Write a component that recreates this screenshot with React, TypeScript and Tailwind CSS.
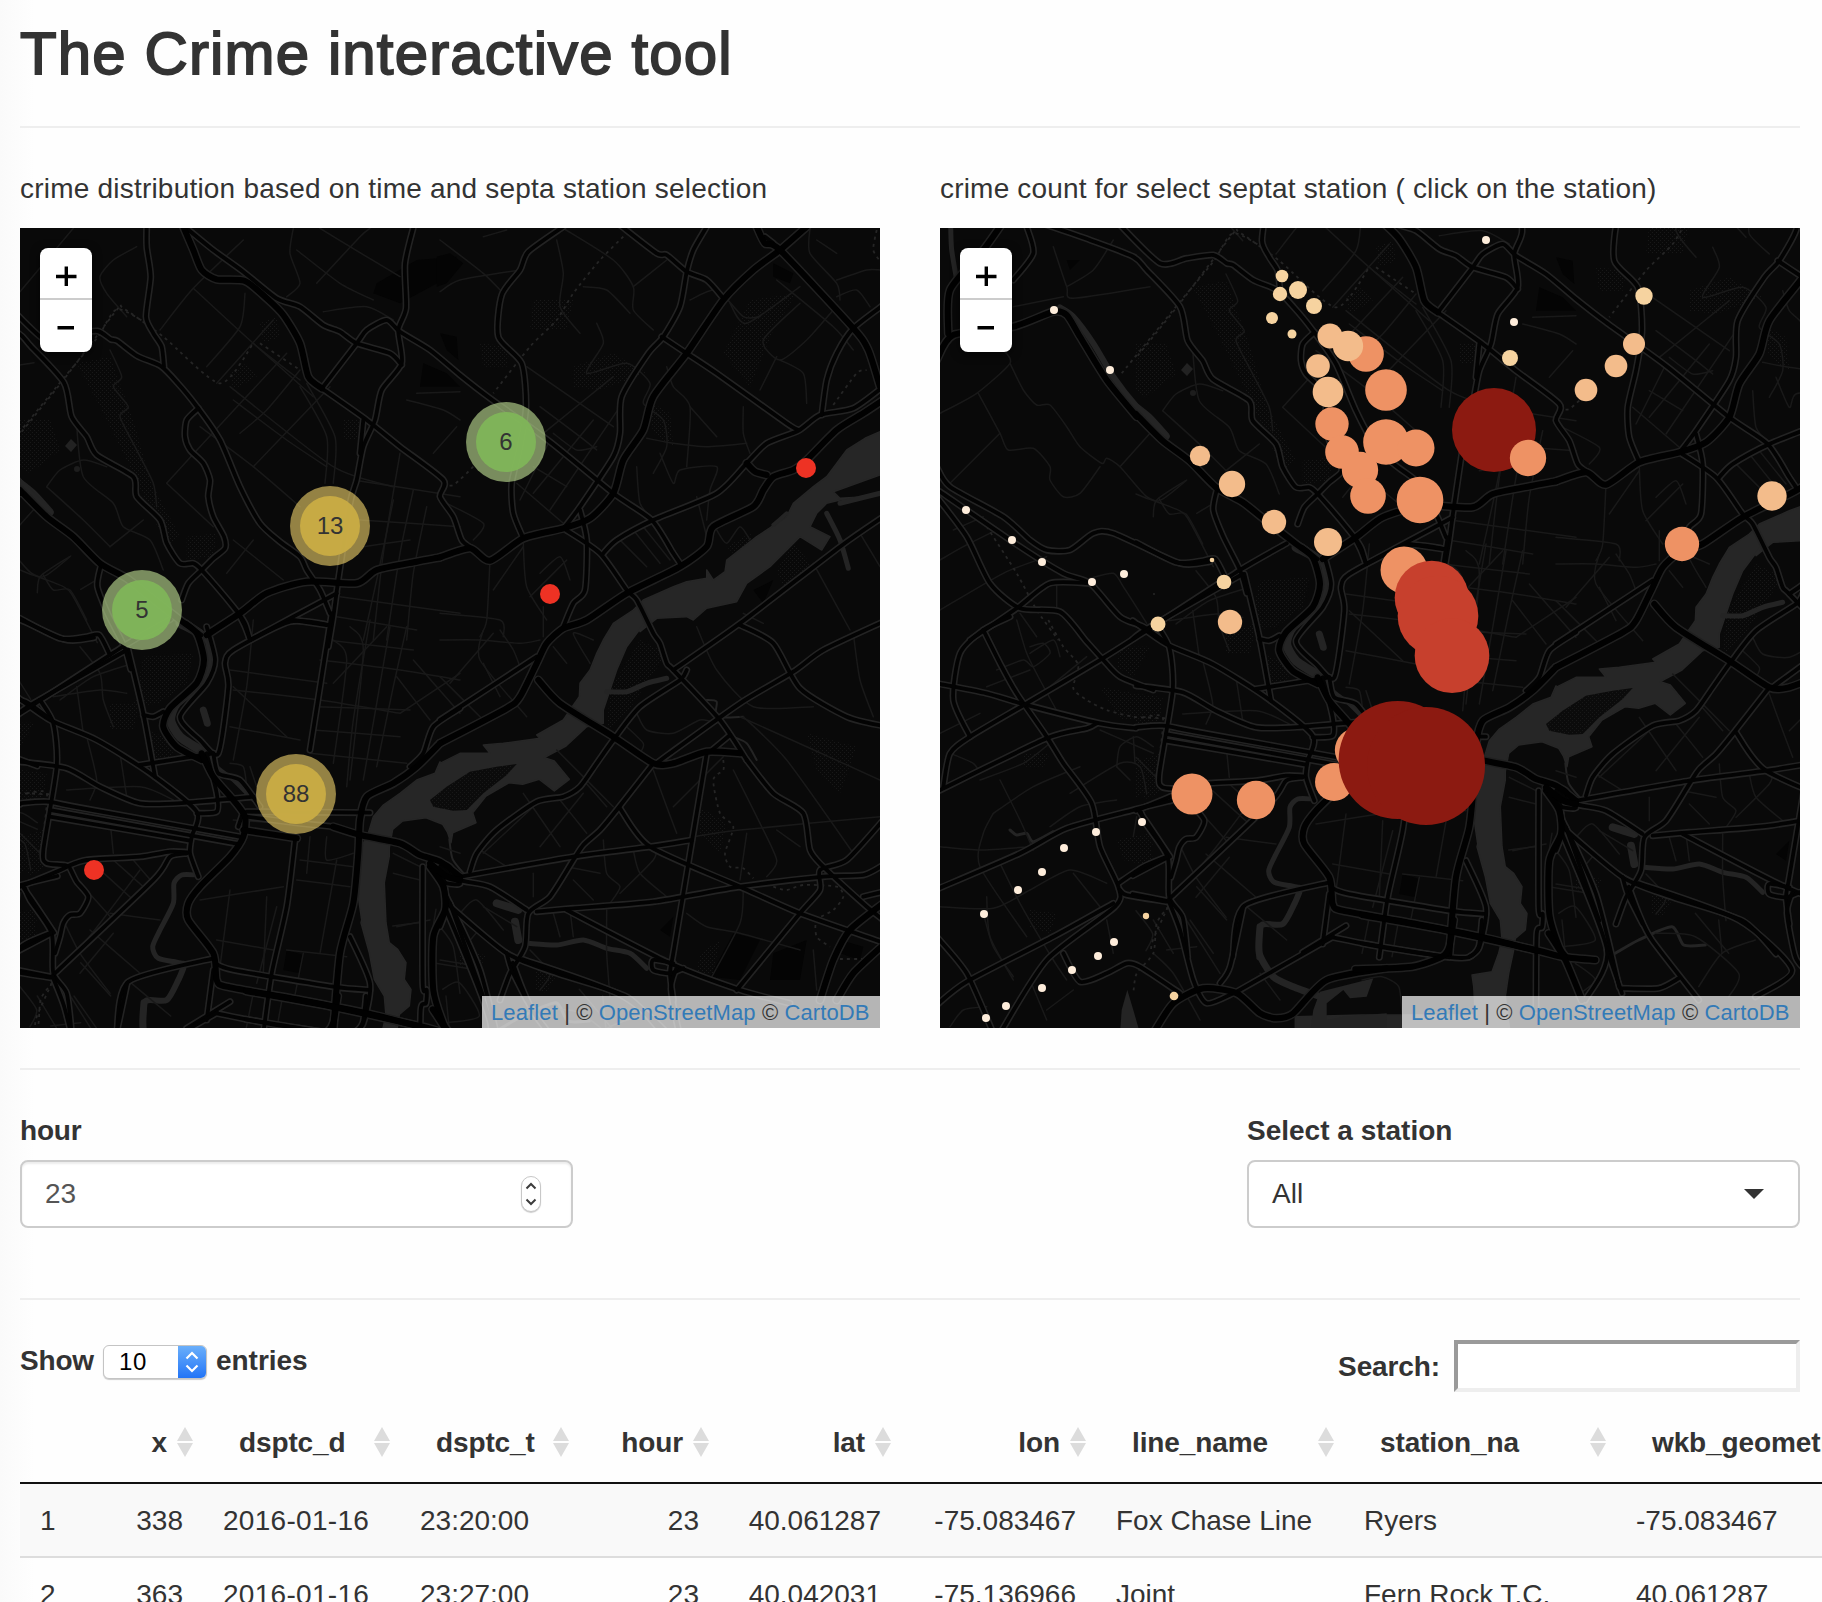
import React from "react";

/* ---------- base map ---------- */

type Pt = [number, number];

// Survey sheets: every sheet is digitised at 3 units per map pixel with its own origin.
const SHEETS: Record<string, Pt> = {
  A: [-20, -8],
  B: [420, -8],
  C: [-20, 392],
  D: [420, 392],
  E: [-216, 68],
  F: [-216, 468],
  G: [226, 468],
};

const parse = (sheet: string, s: string): Pt[] =>
  s.split(" ").map((p) => {
    const [x, y] = p.split(",").map(Number);
    return [x / 3 + SHEETS[sheet][0], y / 3 + SHEETS[sheet][1]] as Pt;
  });

const smooth = (p: Pt[]): string => {
  let d = `M${p[0][0].toFixed(1)} ${p[0][1].toFixed(1)}`;
  const k = 0.12;
  for (let i = 0; i < p.length - 1; i++) {
    const a = p[i - 1] || p[i];
    const b = p[i];
    const c = p[i + 1];
    const e = p[i + 2] || c;
    const q = [
      b[0] + (c[0] - a[0]) * k,
      b[1] + (c[1] - a[1]) * k,
      c[0] - (e[0] - b[0]) * k,
      c[1] - (e[1] - b[1]) * k,
      c[0],
      c[1],
    ].map((v) => v.toFixed(1));
    d += `C${q.join(" ")}`;
  }
  return d;
};

const line = (row: string) => {
  const sheet = row[0];
  return smooth(parse(sheet, row.slice(2)));
};

const MOTORWAYS = [
  "A 550,20 580,90 605,150 650,178 735,183 800,235 850,285 900,370 925,470 965,505",
  "A 60,810 140,890 220,950 300,1030 380,1075 450,1130 540,1200 590,1240 612,1320 590,1390 510,1465 490,1520 530,1580 605,1620",
  "C 605,400 640,470 700,540 735,590 730,650 690,710 600,800 565,850 565,900 640,1000 650,1080 680,1100 900,1140 1100,1180 1260,1220",
  "A 620,1245 720,1180 800,1120 920,1085 1070,1090 1130,1050 1250,1025 1320,1012",
  "B 0,1012 90,985 150,1022 250,955 370,925 450,895 520,820 550,720 610,630 640,530 740,400 850,240 940,150 1020,90 1100,20",
  "B 950,20 975,70 1020,90 1240,325 1285,390 1320,500",
  "B 1330,540 1270,580 1190,630 1100,720 1060,750 1000,770 970,810 940,860 820,920 800,980 720,1040 560,1120 440,1200 370,1225 320,1270 290,1330 240,1430 200,1465 0,1570",
  "C 1320,370 1250,440 1180,490 1100,530 1080,600 1075,700 1060,850 1020,1000 1000,1230",
  "B 920,730 945,755 980,765",
  "D 295,180 360,250 520,350 640,430 700,430 800,395 900,400",
  "C 730,630 890,655",
  "C 1000,620 1080,645 1200,670 1260,705 1320,725 1380,770",
  "D 1330,850 1230,930 1180,1020 1140,1140",
  "D 1330,975 1240,1060 1190,1140",
  "C 1290,740 1330,800 1335,870 1300,950 1300,1110 1330,1210 1350,1240",
  "C 1290,730 1340,770 1380,780",
  "E 50,420 100,345 280,320 400,275 440,285 480,350 560,480 650,590",
  "E 240,20 190,90 90,210 85,340",
  "F 700,1240 760,1150 850,1105 950,1120 1020,1180 1070,1195 1120,1180 1220,1080 1400,1045",
  "G -20,1048 150,1040 240,1010 262,980 275,900",
  "G 0,885 250,930 520,990 600,1010 700,1020",
  "G 560,940 610,1020 660,1140",
];

const ROADS = [
  "A 440,15 440,80 452,170 438,290 460,340 485,380 492,440",
  "A 965,505 1100,600 1200,680 1330,780 1320,830 1360,890 1385,960 1415,985",
  "A 560,25 640,90 730,155 830,235 900,260 970,315 1020,335 1070,370 1170,400 1205,435",
  "A 1242,15 1215,130 1218,265 1195,330 1205,430 1145,510 1125,600 1090,680 1070,780 1050,850 1015,1080 1000,1190 985,1280",
  "A 1090,600 1080,700",
  "A 970,500 1070,370 1100,330 1160,300 1200,335 1290,390 1380,465 1470,535 1650,665 1840,820 1955,900 2020,1000 2040,1030",
  "E 600,15 720,130 800,115 880,105 920,130 940,135 1000,180 1070,210 1120,260 1183,337 1248,432 1308,572 1368,682 1428,737 1488,782 1508,822 1548,882 1578,952",
  "A 595,565 560,600 555,650 570,690 610,730 630,780 625,830 640,890 672,950 675,985 640,1015 605,1050 565,1090 545,1140",
  "E 380,15 510,60 640,110 680,150 780,260 803,362 848,422 878,477 988,542 998,602 1068,672 1088,742 1128,802 1168,802 1193,822 1288,932 1323,982 1338,1032",
  "A 750,1260 880,1190 1010,1120",
  "A 880,1200 980,1215",
  "A 605,1245 560,1210",
  "A 60,1195 180,1255 260,1250 298,1245 330,1305",
  "B 370,20 265,95 240,150 185,225 175,350 245,430 258,560 240,680 215,790 220,880 250,955",
  "B 540,15 650,100 680,105 740,155 800,180 850,235",
  "B 800,20 760,90 740,155 720,260 670,350 625,400 545,530 540,640 520,710 420,860 375,920",
  "B 665,350 740,400 830,460 1040,610 1075,630",
  "B 1330,500 1240,565 1140,585 1075,632 980,670 920,730 830,820 640,900 530,960 490,1000",
  "B 1145,585 1160,480 1190,400 1240,325 1330,255",
  "B 975,50 1000,70",
  "B 370,925 480,1000 560,1110 590,1140 640,1240 660,1270 680,1330 700,1350 840,1500 920,1620",
  "D 920,420 1000,520 1090,580 1110,690 1150,740 1280,860 1330,900",
  "B 420,870 440,960 435,1110 400,1150 370,1220",
  "B 1330,890 1200,980 900,1210 700,1350",
  "D 740,150 720,180 600,260 520,360 470,430 420,500 370,530 290,545 170,630 110,700 90,755",
  "D 900,15 1000,70 1080,205 1220,290 1330,318",
  "D 1330,5 1150,90 1060,155 900,250 690,400 650,430",
  "D 870,345 810,395",
  "D 640,430 530,570 480,630 430,675 400,720 330,830 265,880 255,980 210,1060 180,1140",
  "D 540,565 630,680 900,800 1080,880 1330,968",
  "D 800,400 760,640 740,760 700,1000 690,1060 700,1140",
  "D 60,770 400,710 630,680 755,660",
  "D 290,875 400,865 640,845 900,800 1150,770 1270,765 1330,735",
  "D 1330,600 1220,720 1140,750 1140,810 1080,880 890,1110",
  "D 1270,830 1330,815",
  "D 380,870 690,1030 900,1110 1050,1150",
  "D 700,1030 640,1020 640,1050 690,1060 730,1045",
  "D 20,850 200,1000 350,1060 560,1130 660,1230",
  "D 30,850 130,1130",
  "D 200,1000 215,1050 260,1140",
  "D 0,725 30,740 60,780 150,800 260,870",
  "D 0,740 60,790 20,790 0,770",
  "D 10,770 20,860 0,920",
  "C 1610,110 1320,300",
  "C 1380,265 1300,320 1270,400 1230,440",
  "C 60,550 140,545 250,565 720,650",
  "C 150,570 715,672",
  "C 150,590 570,662",
  "C 740,575 1110,578",
  "C 60,425 200,445 300,500 420,550 560,548 760,530",
  "C 50,230 150,300 290,360 450,460 590,575 575,650 570,700 595,770",
  "C 50,285 100,250 380,90",
  "C 120,240 160,310 170,440 130,690 140,730 200,740 60,800",
  "C 75,805 90,840 155,940 160,1060 200,1120 215,1240",
  "C 200,740 260,720 420,710 510,695 565,697",
  "C 560,700 510,710 460,780 165,1060",
  "C 385,90 430,280 465,470",
  "C 430,285 460,290 490,275",
  "C 210,745 230,785 265,830 240,880 210,885 190,910 180,950 165,1000",
  "C 50,995 155,940",
  "C 50,1050 160,1072",
  "C 420,435 640,400",
  "C 620,400 650,520 650,575 590,580",
  "C 620,20 645,120 620,190 540,290 600,360 655,400 685,200 675,130 700,90 870,5 990,15",
  "C 720,-10 735,20 750,60",
  "C 995,-20 930,390",
  "C 885,660 860,860 815,1060 790,1240",
  "C 350,1240 385,1085 640,1015",
  "C 645,1030 700,1050 1000,1100 1110,1110",
  "C 640,1050 620,1200",
  "C 560,1225 690,1145",
  "C 650,1180 800,1210 1000,1240",
  "C 1050,950 1110,1090 1090,1210 1060,1238",
  "C 1268,740 1268,1090 1280,1110 1278,1150 1262,1170 1260,1400",
  "C 1340,830 1440,1050 1510,1330",
  "C 640,400 655,460 720,480 780,560",
  "C 730,575 715,620",
  "C 740,590 900,610 1000,620",
  "E 320,20 340,100 280,180",
  "E 50,740 90,800 250,890 330,960 380,990 450,990 520,940 580,940 780,1030 870,1025",
  "E 60,815 300,980 430,1060 510,1090 600,1190 670,1220 740,1270",
  "E 50,830 140,950 210,1090 300,1165 420,1175 500,1265 550,1320 600,1370 700,1410",
  "E 150,1260 290,1165 390,1090 510,1090",
  "E 890,810 880,870 910,950 960,1050 980,1120",
  "E 690,1225 960,1050 1100,970",
  "F 190,30 240,130 290,220 380,350 430,430 515,550 540,680 595,800 585,860 380,1020 240,1240",
  "F 50,190 200,220 320,255 540,310 648,325",
  "F 690,25 540,120 320,250 150,350 90,400 70,500",
  "F 270,-10 190,30 120,100 100,240 150,350",
  "F 50,515 380,355 500,325 530,310",
  "F 50,808 300,700 440,625 640,570 760,540",
  "F 655,570 690,620 750,710",
  "F 595,790 670,740 740,710",
  "F 50,1155 140,1085 400,950 580,850",
  "F 600,810 620,825 740,845",
  "F 50,950 140,1060 220,1240",
  "F 430,1000 480,1085 560,1060 620,1030 660,1040 780,1120",
  "F 950,1115 1240,950",
  "F 745,840 780,930 820,1080 860,1150 940,1120",
  "F 900,1090 930,1040 970,860",
  "G 0,970 250,1010 320,1012 350,980 360,900",
  "G 735,990 780,1120",
  "G 800,800 830,880 870,960 1010,1140",
  "G 600,640 735,990 670,1140",
  "G 780,1105 890,1105 950,1075",
  "G 830,790 1130,900 1290,1050 1180,1130",
  "G 1290,820 1275,880 1300,1010 1330,1050",
];

const STREETS = [
  "A 60,215 220,25", "A 410,80 340,120 300,170 320,220 380,290", "A 480,330 580,205 730,60", "A 580,205 760,370 900,480",
  "A 500,790 600,680 860,400", "A 500,790 640,920", "A 620,440 720,320 735,220", "A 760,740 990,500", "A 650,490 820,300",
  "A 600,620 760,740 900,860", "A 690,500 1000,740 1180,800", "A 760,370 940,530", "A 900,500 980,650 975,790",
  "A 920,490 1005,650 1000,790", "A 860,230 900,190 870,100 880,25", "A 890,90 1020,190 1120,240", "A 950,190 1080,50 1110,25",
  "A 960,25 1050,80 1200,170", "A 970,275 1100,260 1180,300", "A 700,540 860,660 980,740", "A 720,640 800,570 900,450",
  "A 140,800 180,750 250,720 320,740", "A 230,620 250,770 340,850 370,920 450,960 490,1050", "A 60,1050 130,1070 210,1010",
  "A 130,1065 160,1110 210,1110 260,1200", "A 330,980 430,900", "A 140,800 250,900 330,980", "A 330,390 365,470 340,500 385,560 360,590 410,690 460,790 470,860",
  "A 700,960 850,1080", "A 680,1060 760,960", "A 1060,780 1380,830", "A 1080,900 1380,920", "A 1090,980 1230,960",
  "A 1200,700 1150,1000 1120,1260", "A 1240,810 1200,1000 1160,1260", "A 1280,860 1240,1060 1220,1260", "A 1180,840 1130,1080 1090,1260",
  "A 1020,1130 1380,1180", "A 1010,1190 1250,1230", "A 1250,520 1380,515", "A 1220,540 1330,570 1380,600", "A 1370,620 1300,700",
  "B 0,60 130,160 180,210", "B 0,215 60,180 240,150", "B 130,50 200,30", "B 350,60 370,160 360,260 420,340", "B 370,25 520,120 580,200 580,270 640,330",
  "B 430,200 500,210 570,280", "B 580,200 680,120", "B 470,310 490,370 440,460 560,430 630,490 610,550 670,600 680,680 640,760",
  "B 260,440 520,620", "B 310,640 520,470", "B 280,820 460,600", "B 330,870 540,560", "B 300,560 420,650 470,690", "B 230,790 370,910",
  "B 340,640 410,690 470,680", "B 280,740 380,800", "B 240,840 330,660", "B 750,240 830,210 910,290 960,290", "B 860,240 900,190 1000,110",
  "B 870,250 920,310 1080,200", "B 1010,180 1180,320 1240,390", "B 1080,250 970,360 1020,420 1100,360 1180,270", "B 1020,420 1090,460 1100,550",
  "B 960,510 1010,410", "B 910,560 910,640 930,700", "B 680,440 700,500 750,560 740,740", "B 750,560 830,650", "B 620,655 700,670 800,680 920,670",
  "B 660,700 700,790 720,750 830,740 810,810 800,900", "B 590,740 600,850 640,900", "B 770,830 800,950", "B 540,960 620,1040", "B 580,930 660,1030", "B 610,920 690,1020",
  "B 830,930 860,970 900,920 930,960", "B 1110,25 1110,100 1190,190 1200,240", "B 1130,60 1190,100", "B 1190,180 1280,150 1320,150", "B 1190,230 1250,210 1290,260",
  "B 0,840 130,910 100,960", "B 250,970 260,1100 320,1200", "B 160,1110 250,980", "B 0,1180 180,1200 190,1250", "B 150,1020 140,1200 120,1250",
  "B 300,1060 360,1010 390,1080", "B 270,1130 380,1020", "B 310,1160 310,1250", "B 1260,940 1320,1040", "B 1120,1030 1230,1230", "B 910,1180 970,1210",
  "C 690,150 980,190", "C 700,210 960,240 1200,280", "C 690,320 900,360", "C 1000,60 1040,120 1000,430", "C 1050,20 1090,90 1050,480", "C 1110,0 1060,300 1040,500",
  "C 1170,20 1130,250 1090,480", "C 1220,20 1180,200 1130,440", "C 960,120 1200,150 1380,180", "C 980,60 1240,90", "C 950,260 1230,270",
  "C 940,330 1200,350", "C 1000,190 1160,20", "C 930,400 1220,430", "C 1190,170 1290,300", "C 1240,120 1380,280", "C 1200,280 1380,160", "C 690,430 730,440 740,500",
  "C 700,200 860,350", "C 760,0 740,200 700,420", "C 240,80 300,160 310,240 340,320", "C 160,230 300,210 380,220", "C 180,240 280,170 400,130", "C 230,200 250,340",
  "C 260,350 290,480 270,540", "C 360,400 380,530", "C 200,510 420,500 520,540", "C 60,640 120,700", "C 330,600 340,700", "C 250,800 340,900", "C 290,740 400,840",
  "C 340,720 430,800", "C 400,720 460,790", "C 190,900 240,1000 330,1120", "C 220,1010 300,910 420,750", "C 240,1060 340,940", "C 270,930 420,1060", "C 330,880 480,900",
  "C 690,810 660,1040", "C 600,840 850,800", "C 650,960 820,990", "C 830,860 770,1090", "C 800,830 790,1060", "C 900,720 1060,740", "C 890,780 1050,800",
  "C 1010,720 960,1000", "C 980,650 980,720 1060,700", "C 930,650 920,760", "C 860,990 1040,1010", "C 910,1000 880,1150", "C 770,500 750,440", "C 700,600 860,610",
  "C 60,1100 110,1170 90,1220", "C 1190,920 1290,900", "C 1180,700 1260,740", "C 1180,760 1260,780",
  "D 0,60 120,60 240,70 300,60", "D 130,30 120,120 260,290", "D 180,30 220,90 240,140", "D 30,190 160,40", "D 0,170 130,300", "D 130,130 180,230", "D 340,80 380,130",
  "D 450,130 400,40 460,60", "D 590,280 620,330 700,340 780,300 830,310", "D 560,320 610,370 600,400", "D 770,20 830,150 940,260 1120,260", "D 1240,40 1260,180 1300,290",
  "D 900,290 1100,380 1320,480", "D 910,290 1040,420 1240,700", "D 760,650 900,630 1320,590", "D 880,450 950,590 1010,720 980,770", "D 920,640 900,780", "D 1010,630 1080,680",
  "D 640,450 680,560 710,640", "D 350,390 520,560", "D 250,520 360,680", "D 360,540 440,640", "D 130,700 280,560", "D 300,680 430,520", "D 430,480 500,560",
  "D 490,660 500,760 540,800 510,850", "D 540,820 640,720 650,680", "D 580,690 600,760 680,830", "D 380,740 480,760", "D 280,760 280,830", "D 400,780 460,840", "D 740,880 800,920 900,940 1080,990",
  "D 810,1080 900,910 910,810", "D 500,870 500,1000 510,1130", "D 0,680 60,700", "D 60,880 110,840 190,930", "D 130,860 230,920", "D 1120,990 1130,1110", "D 0,920 40,980 60,1120",
  "D 390,870 400,950", "D 340,880 360,950", "D 0,1020 120,1040", "D 270,990 330,1060 300,1110", "D 120,690 200,740", "D 850,410 700,560",
  "E 60,580 170,520 270,430 250,390", "E 270,430 310,510 350,555 390,555 440,620 480,680 545,730 560,715 600,740 680,830 750,860 800,890 880,1040", "E 175,520 240,640 265,690 340,685 390,740 390,780 430,830 480,820 540,740",
  "E 600,740 690,640", "E 240,640 90,790", "E 400,80 440,200 460,235 690,200", "E 280,260 430,230", "E 440,200 520,150 580,60", "E 700,890 710,840 800,780", "E 830,880 880,850",
  "E 100,930 190,890", "E 60,1020 130,980 230,930", "E 60,1170 250,1060 380,1010", "E 510,1075 580,1060 610,1100 680,1210", "E 410,1090 410,1170", "E 300,1180 350,1250",
  "F 290,0 320,100 360,180 420,290", "F 60,340 180,280", "F 230,150 310,120 340,140 390,100 370,70 330,80", "F 390,200 500,110", "F 330,100 400,60 420,110", "F 200,200 330,150",
  "F 90,400 160,430 180,460", "F 180,480 310,430 390,370", "F 220,580 340,500 480,440", "F 220,580 190,640 180,740 320,950", "F 240,480 300,600 340,690", "F 390,620 480,560 590,540",
  "F 60,680 180,690 330,680", "F 240,730 300,850 400,1020 440,1080", "F 60,860 220,865 330,810 450,750 560,790", "F 200,830 210,950 280,1080", "F 540,330 700,400", "F 590,440 600,380 650,350 700,380", "F 640,350 645,430",
  "F 590,440 630,480", "F 450,520 600,430 660,440 680,520", "F 190,880 220,980 280,1070", "F 330,1080 380,1200", "F 560,900 580,1000", "F 460,760 540,860", "F 700,1000 760,1060 840,1200", "F 380,1170 460,1110", "F 740,990 830,980",
  "F 700,900 760,1000", "F 810,900 880,1000", "F 980,860 1100,960", "F 780,870 900,1060", "F 830,800 920,900", "F 650,590 640,650", "F 90,1220 130,1170 200,1160", "F 1020,1060 1080,1140",
  "G 20,900 0,1000", "G 110,900 90,1010", "G 570,640 550,760", "G 440,690 520,680", "G 560,800 680,820", "G 650,760 700,700", "G 590,880 640,860 700,960 600,980", "G 600,900 610,1000",
  "G 640,1030 700,1080 640,1130", "G 880,940 1000,950 1130,1060 1100,1130", "G 1070,900 1080,1000", "G 0,1080 60,1070 110,1100 120,1180", "G 1000,880 1100,1000", "G 1010,1100 1080,1000 1180,960",
];

const BOUNDARIES = [
  "A 65,635 190,480 350,270 370,265 490,350 660,490 760,370",
  "A 780,370 900,450",
  "B 550,50 480,120 400,220 350,300 270,380 160,520",
  "B 100,740 40,795 0,790",
  "D 850,420 850,450 820,480 840,580 880,620 855,700 870,740 910,745 940,775",
  "D 1000,800 1040,810 1090,795 1190,800 1210,830 1180,870 1130,900 1130,950 1170,980",
  "C 80,520 140,520 130,640 120,700",
  "C 155,1090 110,1190 105,1225",
  "E 605,460 780,245 880,125 940,40 1040,90",
  "E 200,920 290,1060 350,1170 415,1260",
  "F 385,0 430,80 475,135 460,205 500,240 560,270 640,290 740,295",
  "F 745,860 710,910 700,1000 650,1060 640,1120",
  "B 1180,555 1250,460 1280,450",
  "B 1310,30 1300,90 1325,130",
  "D 1200,1017 1270,1017",
];

const join = (parts: [string, string][]) =>
  "M" + parts.flatMap(([s, p]) => parse(s, p)).map(([x, y]) => `${x.toFixed(1)} ${y.toFixed(1)}`).join("L") + "Z";

const DELAWARE = join([
  ["B", "1400,610 1320,635 1275,655 1220,690 1160,770 1120,800 1060,850 1040,890 950,950 860,1020 855,1055 820,1080 800,1050 800,1075 740,1085 700,1100 610,1140 580,1170 520,1210 490,1260"],
  ["D", "470,100 450,150 420,190 418,230 390,270 370,300 290,345 300,355 190,370 130,375 150,400 60,400 0,430"],
  ["C", "1320,425 1305,460 1250,480 1200,520 1150,555 1120,590 1105,640 1080,690 1075,830 1085,900"],
  ["G", "345,680 370,770 385,850 415,900 420,960 410,1000 390,1055 330,1065 335,1100 340,1185 0,1185 -200,1190 -200,1280 450,1280 430,1130 440,1060 455,990 460,955 490,930 495,880 475,850 480,800 455,760 430,740 420,680 415,560 430,480 430,455 440,400 470,375 540,365 590,385 605,410 615,440 620,410 690,380 680,350 720,300 790,260 830,265 880,250 925,285 970,250 925,195 895,185 960,150"],
  ["D", "440,320 490,310 490,270 510,210 530,150 560,80 620,0"],
  ["B", "600,1235 650,1195 740,1190 760,1200 800,1165 890,1145 920,1090 990,1040 1080,950 1145,990 1170,950 1110,920 1130,880 1160,850 1200,840 1280,830 1200,835 1180,815 1320,765 1400,740"],
]);

const PETTY = join([["D", "-30,540 20,500 90,455 170,440 230,432 200,465 130,520 80,570 40,572 -20,560"]]);

const WATER_LINES: [string, number][] = [
  ["C 540,10 625,60 628,130 600,190 530,250 512,300 540,350 610,395", 9],
  ["C 610,395 650,440 700,480 760,540", 4],
  ["A 50,780 100,820 150,875", 7],
  ["A 500,1170 600,1235", 6],
  ["C 590,765 545,765 522,790 520,850 480,930 458,980 475,1015 550,1030", 5],
  ["C 550,1045 535,1080 500,1140 435,1145 430,1240", 6],
  ["F 1020,920 1018,1000 1060,1070 1120,1100 1200,1130", 7],
  ["E 420,262 460,290 520,370 580,470 650,560 740,650", 6],
  ["E 92,20 95,90 110,180", 5],
  ["D 500,215 560,215 620,190 680,175", 5],
  ["D 265,970 350,975 430,960 500,985 570,1000 620,1045", 5],
  ["D 170,850 235,870", 8],
  ["D 225,905 235,960", 8],
  ["B 1160,880 1200,960 1225,1045", 5],
  ["B 1200,850 1320,820", 5],
  ["B 1000,915 1040,880", 4],
  ["C 610,270 622,310", 7],
  ["G 610,430 620,490 660,540", 2],
  ["G 760,1000 830,960 930,920 965,975 1030,975", 3],
  ["F 270,630 290,645 320,640 340,665 400,635", 3],
  ["D 800,240 830,245 830,290 910,290", 2],
  ["D 880,350 920,370 950,420", 2],
];

const GREENS = [
  "A 60,600 150,600 180,690 90,760 60,740", "A 230,430 330,410 400,600 450,780 540,950 500,980 400,760 300,560", "A 690,460 740,430 770,470 700,510",
  "A 780,310 830,290 840,350 790,370", "A 1030,600 1080,600 1070,660 1030,660", "A 560,950 650,940 640,1010 560,1020",
  "B 280,240 400,240 380,330 270,330", "B 120,370 210,380 200,440 130,440", "B 400,440 520,400 620,460 480,510 400,500", "B 620,540 690,580 700,680 640,640",
  "B 930,240 1070,220 1000,330 930,500 850,400", "B 860,980 930,940 950,980 900,1020", "B 1060,970 1120,1040 1030,1100 1010,1050",
  "C 430,110 580,100 560,190 480,250 400,260", "C 330,250 420,250 400,330 330,330", "C 440,330 540,370 500,420 450,420", "C 60,450 140,460 130,540 60,540", "C 60,640 120,660 100,740 60,760",
  "C 60,880 110,900 90,960 60,960", "D 510,210 600,60 680,100 560,280 500,340", "D 0,510 130,450 200,450 60,560", "D 1100,340 1250,380 1200,520 1130,450",
  "D 780,1000 840,960 820,1060 770,1060", "D 780,560 860,610 840,700 780,640",
  "F 600,80 690,80 640,170 590,140", "F 540,200 700,230 720,300 600,300", "F 590,660 690,640 700,740 610,720", "F 660,420 720,400 720,520 670,540", "F 330,870 410,880 390,940 330,920", "F 310,400 390,400 370,440 310,440",
  "G 640,750 720,780 700,820 640,810", "G 870,820 930,840 900,890 870,880",
];

const SHADES = [
  "A 1130,190 1250,120 1370,110 1330,180 1200,250 1120,220", "A 1270,430 1340,460 1380,500 1260,500", "A 1320,340 1370,350 1375,420 1340,390",
  "B -10,110 30,100 70,130 20,190 -10,200", "B 1000,130 1060,160 1050,190 1000,170", "C 860,990 910,1005 900,1060 850,1050",
  "D 880,940 960,960 900,1080 810,1070", "D 1000,1000 1100,960 1080,1080 990,1080", "D 1200,960 1270,980 1260,1020 1200,1000", "D 660,930 700,890 690,950", "B 940,1110 1000,1080 970,1150", "E 440,120 480,120 450,150",
];

function BaseMap({ dx, dy, id }: { dx: number; dy: number; id: string }) {
  return (
    <svg className="absolute inset-0 h-full w-full" viewBox="0 0 860 800">
      <defs>
        <pattern id={id} width="4" height="4" patternUnits="userSpaceOnUse">
          <rect width="1" height="1" fill="#181818" />
          <rect x="2" y="2" width="1" height="1" fill="#181818" />
        </pattern>
      </defs>
      <rect width="860" height="800" fill="#090909" />
      <g transform={`translate(${dx} ${dy})`} fill="none" strokeLinecap="round" strokeLinejoin="round">
        {SHADES.map((r) => (
          <path key={r} d={join([[r[0], r.slice(2)]])} fill="#040404" />
        ))}
        {GREENS.map((r) => (
          <path key={r} d={join([[r[0], r.slice(2)]])} fill={`url(#${id})`} />
        ))}
        <path d={DELAWARE} fill="#262626" stroke="#262626" strokeWidth="1.5" />
        <path d={PETTY} fill="#0b0b0b" />
        <path d={PETTY} fill={`url(#${id})`} />
        {WATER_LINES.map(([r, w]) => (
          <path key={r} d={line(r)} stroke="#242424" strokeWidth={w} />
        ))}
        <path d="M51 211l6 6-6 7-6-6z" fill="#222222" />
        <circle cx="57" cy="241" r="3" fill="#1d1d1d" />
        <path d={join([["F", "600,1240 605,1170 622,1110 640,1170 660,1240"]])} fill="#242424" />
        <path d={join([["F", "1170,1240 1180,1170 1200,1115 1280,1095 1360,1075 1340,1130 1290,1135 1270,1110 1220,1150 1220,1200 1270,1190 1400,1180 1400,1240"]])} fill="#242424" />
        {STREETS.map((r) => (
          <path key={r} d={line(r)} stroke="#191919" strokeWidth="1.5" />
        ))}
        {BOUNDARIES.map((r) => (
          <path key={r} d={line(r)} stroke="#252525" strokeWidth="1.8" strokeDasharray="3 4" strokeLinecap="butt" />
        ))}
        {ROADS.map((r) => (
          <path key={r} d={line(r)} stroke="#232323" strokeWidth="7" />
        ))}
        {MOTORWAYS.map((r) => (
          <path key={r} d={line(r)} stroke="#202020" strokeWidth="9" />
        ))}
        {ROADS.map((r) => (
          <path key={r} d={line(r)} stroke="#030303" strokeWidth="3.8" />
        ))}
        {MOTORWAYS.map((r) => (
          <path key={r} d={line(r)} stroke="#010101" strokeWidth="6" />
        ))}
      </g>
    </svg>
  );
}

/* ---------- markers ---------- */

const CREAM = "#feeddb";
const SAND = "#f6d3a0";
const PEACH = "#f3bc8b";
const ORANGE = "#ee9264";
const RED = "#c7402d";
const DARK = "#8c1a11";

const NW: Pt = [-20, -8];
const NE: Pt = [422, -8];
const SW: Pt = [-20, 392];
const SE: Pt = [422, 392];

// quadrant, x, y, diameter (3 units per pixel), fill
const STATIONS: [Pt, number, number, number, string][] = [
  [NW, 402, 270, 24, CREAM], [NW, 570, 450, 24, CREAM], [NW, 138, 870, 24, CREAM], [NW, 276, 960, 24, CREAM],
  [NW, 366, 1026, 24, CREAM], [NW, 516, 1086, 24, CREAM], [NW, 612, 1062, 24, CREAM], [NW, 702, 1122, 4, "#4a4a4a"],
  [NW, 876, 1020, 14, SAND], [NW, 912, 1086, 44, SAND], [NW, 714, 1212, 45, SAND], [NW, 930, 1206, 73, PEACH],
  [NW, 840, 708, 61, PEACH], [NW, 936, 792, 79, PEACH], [NW, 1062, 906, 73, PEACH], [NW, 1224, 966, 84, PEACH],
  [NW, 1086, 168, 38, SAND], [NW, 1134, 210, 54, SAND], [NW, 1080, 222, 43, SAND], [NW, 1182, 258, 48, SAND],
  [NW, 1056, 294, 36, SAND], [NW, 1116, 342, 27, SAND], [NW, 1338, 402, 107, ORANGE], [NW, 1230, 348, 75, PEACH],
  [NW, 1284, 378, 91, PEACH], [NW, 1194, 438, 71, PEACH], [NW, 1224, 516, 92, PEACH], [NW, 1236, 612, 100, ORANGE],
  [NW, 1266, 696, 101, ORANGE], [NW, 1320, 750, 109, ORANGE], [NW, 1344, 828, 107, ORANGE],
  [NE, 72, 510, 125, ORANGE], [NE, 72, 666, 137, ORANGE], [NE, 162, 684, 111, ORANGE], [NE, 174, 840, 140, ORANGE],
  [NE, 372, 60, 24, CREAM], [NE, 456, 306, 24, CREAM], [NE, 444, 414, 48, SAND], [NE, 846, 228, 52, SAND],
  [NE, 816, 372, 66, PEACH], [NE, 762, 438, 68, PEACH], [NE, 672, 510, 68, PEACH], [NE, 396, 630, 252, DARK],
  [NE, 498, 714, 109, ORANGE], [NE, 1230, 828, 88, PEACH], [NE, 960, 972, 103, ORANGE], [NE, 126, 1050, 141, ORANGE],
  [NE, 209, 1133, 222, RED], [NE, 228, 1188, 242, RED], [SE, 270, 107, 224, RED],
  [SW, 816, 522, 123, ORANGE], [SW, 1008, 540, 115, ORANGE], [SW, 1242, 486, 114, ORANGE], [SW, 1310, 390, 131, ORANGE],
  [SE, 107, 420, 354, DARK], [SE, 192, 438, 354, DARK],
  [SW, 666, 606, 24, CREAM], [SW, 528, 636, 24, CREAM], [SW, 432, 684, 24, CREAM], [SW, 366, 756, 24, CREAM],
  [SW, 294, 810, 24, CREAM], [SW, 192, 882, 24, CREAM], [SW, 678, 888, 19, SAND], [SW, 582, 966, 24, CREAM],
  [SW, 534, 1008, 24, CREAM], [SW, 456, 1050, 24, CREAM], [SW, 366, 1104, 24, CREAM], [SW, 258, 1158, 24, CREAM],
  [SW, 198, 1194, 24, CREAM], [SW, 762, 1128, 26, SAND],
];

function StationDots() {
  return (
    <svg className="absolute inset-0 h-full w-full" viewBox="0 0 860 800">
      {STATIONS.map(([o, x, y, d, fill], i) => (
        <circle key={i} cx={x / 3 + o[0]} cy={y / 3 + o[1]} r={d / 6} fill={fill} />
      ))}
    </svg>
  );
}

const CLUSTERS = [
  { n: 6, x: 486, y: 214, green: true },
  { n: 13, x: 310, y: 298, green: false },
  { n: 5, x: 122, y: 382, green: true },
  { n: 88, x: 276, y: 566, green: false },
];

const CRIMES: Pt[] = [[786, 240], [530, 366], [74, 642]];

function CrimeMarkers() {
  return (
    <>
      {CRIMES.map(([x, y]) => (
        <div key={x} className="absolute -mt-[10px] -ml-[10px] size-5 rounded-full bg-[#ee3224]" style={{ left: x, top: y }} />
      ))}
      {CLUSTERS.map((c) => (
        <div
          key={c.n}
          className={
            "absolute -mt-10 -ml-10 flex size-20 items-center justify-center rounded-full " +
            (c.green ? "bg-[#b5d28c]/65" : "bg-[#f1d36c]/60")
          }
          style={{ left: c.x, top: c.y }}
        >
          <div
            className={
              "flex size-[60px] items-center justify-center rounded-full text-2xl " +
              (c.green ? "bg-[#80b559]/95" : "bg-[#c9ac44]/95")
            }
          >
            {c.n}
          </div>
        </div>
      ))}
    </>
  );
}

function MapPanel({ dx = 0, dy = 0, id, children }: { dx?: number; dy?: number; id: string; children: React.ReactNode }) {
  return (
    <div className="relative h-[800px] w-[860px] overflow-hidden bg-[#090909]">
      <BaseMap dx={dx} dy={dy} id={id} />
      {children}
      <div className="absolute top-5 left-5 w-[52px] overflow-hidden rounded-lg bg-white shadow-[0_2px_10px_rgba(0,0,0,0.65)]">
        <button className="flex h-[52px] w-full items-center justify-center border-b-2 border-[#cccccc]">
          <svg width="52" height="50" viewBox="0 0 52 50" stroke="#000" fill="none">
            <path d="M16 28.5h20.5M26.3 18.5v19.5" strokeWidth="3.4" />
          </svg>
        </button>
        <button className="flex h-[52px] w-full items-center justify-center">
          <svg width="52" height="52" viewBox="0 0 52 52" stroke="#000" fill="none">
            <path d="M17.500 27.700h16.500" strokeWidth="3.4" />
          </svg>
        </button>
      </div>
      <div className="absolute right-0 bottom-0 flex h-8 w-[398px] items-center bg-white/70 pt-0.5 pl-[9px] text-[22px] whitespace-pre tracking-[0.12px]">
        <span className="text-[#337ab7]">Leaflet</span> | © <span className="text-[#337ab7]">OpenStreetMap</span> ©{" "}
        <span className="text-[#337ab7]">CartoDB</span>
      </div>
    </div>
  );
}

/* ---------- table ---------- */

const HEADERS: [string, boolean][] = [
  ["x", true], ["dsptc_d", false], ["dsptc_t", false], ["hour", true], ["lat", true], ["lon", true],
  ["line_name", false], ["station_na", false], ["wkb_geometry", false],
];

const ROWS = [
  ["1", "338", "2016-01-16", "23:20:00", "23", "40.061287", "-75.083467", "Fox Chase Line", "Ryers", "-75.083467"],
  ["2", "363", "2016-01-16", "23:27:00", "23", "40.042031", "-75.136966", "Joint", "Fern Rock T.C.", "40.061287"],
];

const GRID = "grid w-[1900px] grid-cols-[60px_123px_197px_179px_140px_182px_195px_248px_272px_304px]";

function SortIcon() {
  return (
    <svg className="absolute top-1/2 right-[10px] -mt-[14px]" width="16" height="30" viewBox="0 0 16 30" fill="#dcdcdc">
      <path d="M8 0l8 14H0zM8 30l8-14H0z" />
    </svg>
  );
}

function DataTable() {
  return (
    <div className="w-[1802px] overflow-hidden">
      <div className={GRID + " h-[84px] border-b-2 border-[#111111] font-bold tracking-[-0.12px]"}>
        <div />
        {HEADERS.map(([h, right]) => (
          <div key={h} className={"relative flex items-center px-9 pt-1 " + (right ? "justify-end" : "")}>
            {h}
            <SortIcon />
          </div>
        ))}
      </div>
      {ROWS.map((r, i) => (
        <div key={r[0]} className={GRID + " h-[74px] items-center border-b-2 border-[#dddddd] pt-0.5 " + (i === 0 ? "bg-[#f9f9f9]" : "")}>
          {r.map((c, j) => (
            <div
              key={j}
              className={
                "px-5 whitespace-nowrap " +
                ([1, 4, 5, 6].includes(j) ? "text-right" : "") +
                (j === 2 ? "tracking-[0.3px]" : "")
              }
            >
              {c}
            </div>
          ))}
        </div>
      ))}
    </div>
  );
}

/* ---------- page ---------- */

export default function App() {
  return (
    <div className="h-[1602px] w-[1822px] overflow-hidden bg-[linear-gradient(to_right,#fafafa_0,#fefefe_34px)] pl-5 font-['Liberation_Sans',Arial,sans-serif] text-[28px] leading-10 text-[#333333]">
      <h1 className="h-[126px] pt-[21px] text-[60px] leading-[66px] font-normal tracking-[1.12px] [-webkit-text-stroke:1.8px_#333333]">
        The Crime interactive tool
      </h1>
      <div className="h-0.5 w-[1780px] bg-[#eeeeee]" />

      <div className="flex gap-[60px] pt-10">
        <div>
          <div className="h-[60px] pt-px tracking-[0.21px]">crime distribution based on time and septa station selection</div>
          <MapPanel id="dots-left">
            <CrimeMarkers />
          </MapPanel>
        </div>
        <div>
          <div className="h-[60px] pt-px tracking-[0.19px]">crime count for select septat station ( click on the station)</div>
          <MapPanel id="dots-right" dx={196} dy={-76}>
            <StationDots />
          </MapPanel>
        </div>
      </div>

      <div className="mt-10 h-0.5 w-[1780px] bg-[#eeeeee]" />

      <div className="flex w-[1780px] justify-between pt-10">
        <div className="w-[553px]">
          <div className="h-[50px] pt-px font-bold tracking-[-0.2px]">hour</div>
          <div className="flex h-[68px] items-center justify-between rounded-lg border-2 border-[#cccccc] bg-white pr-[30px] pl-[23px] text-[#555555] shadow-[inset_0_2px_2px_rgba(0,0,0,0.075)]">
            23
            <div className="flex h-9 w-5 flex-col items-center justify-center rounded-full border border-[#c8c8c8] bg-white shadow-[0_1px_1px_rgba(0,0,0,0.2)]">
              <svg width="12" height="24" viewBox="0 0 12 24" fill="none" stroke="#3c3c3c" strokeWidth="2">
                <path d="M1.5 6.5L6 2l4.500 4.500M1.500 17.500L6 22l4.500-4.500" />
              </svg>
            </div>
          </div>
        </div>
        <div className="w-[553px]">
          <div className="h-[50px] pt-px font-bold">Select a station</div>
          <div className="flex h-[68px] items-center justify-between rounded-lg border-2 border-[#cccccc] bg-white pr-[34px] pl-[23px]">
            All
            <svg width="20" height="10" viewBox="0 0 20 10" fill="#333333">
              <path d="M0 0h20L10 10z" />
            </svg>
          </div>
        </div>
      </div>

      <div className="mt-[70px] h-0.5 w-[1780px] bg-[#eeeeee]" />

      <div className="flex h-[100px] w-[1780px] justify-between pt-[41px] font-bold">
        <div className="flex h-10 items-center">
          <span className="tracking-[-0.2px]">Show</span>
          <div className="relative top-px mr-[9px] ml-[9px] flex h-[34px] w-[104px] overflow-hidden rounded-md border border-[#c4c4c4] bg-white text-2xl leading-8 font-normal text-black shadow-[0_1px_1px_rgba(0,0,0,0.2)]">
            <div className="w-[74px] pl-[15px] tracking-[0.8px]">10</div>
            <div className="-my-px flex flex-1 items-center justify-center bg-linear-to-b from-[#6cb0fa] to-[#1f72f6]">
              <svg width="14" height="22" viewBox="0 0 14 22" fill="none" stroke="#fff" strokeWidth="2.2">
                <path d="M1.500 7.500L7 2l5.500 5.500M1.500 14.500L7 20l5.500-5.500" />
              </svg>
            </div>
          </div>
          entries
        </div>
        <div className="-mt-px flex h-[52px] items-center gap-[14px]">
          <span className="pt-px tracking-[-0.12px]">Search:</span>
          <div className="h-[52px] w-[346px] border-4 border-t-[#9a9a9a] border-r-[#eeeeee] border-b-[#eeeeee] border-l-[#9a9a9a] bg-white" />
        </div>
      </div>

      <DataTable />
    </div>
  );
}
